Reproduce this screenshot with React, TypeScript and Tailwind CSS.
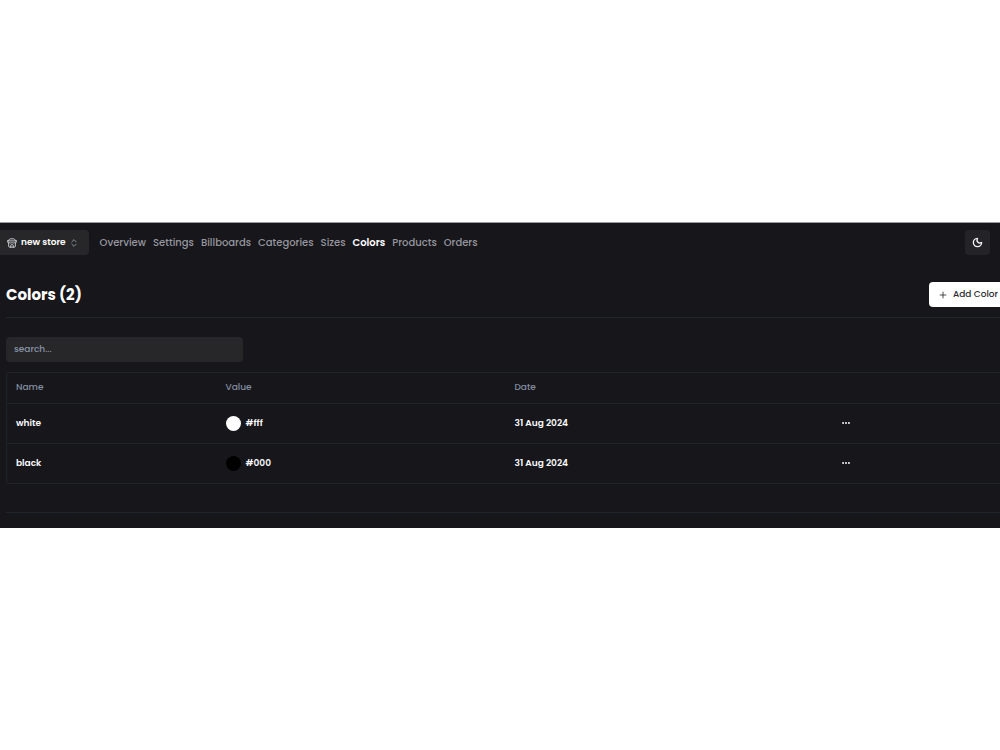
import { ChevronsUpDown, Ellipsis, Moon, Plus } from 'lucide-react';

type Color = {
  id: string;
  name: string;
  value: string;
  swatch: string;
  createdAt: string;
};

const ROUTES = [
  'Overview',
  'Settings',
  'Billboards',
  'Categories',
  'Sizes',
  'Colors',
  'Products',
  'Orders',
];

const ACTIVE_ROUTE = 'Colors';

const COLORS: Color[] = [
  { id: '1', name: 'white', value: '#fff', swatch: 'bg-white', createdAt: '31 Aug 2024' },
  { id: '2', name: 'black', value: '#000', swatch: 'bg-black', createdAt: '31 Aug 2024' },
];

function StoreIcon() {
  return (
    <svg
      aria-hidden="true"
      className="mr-1 size-[10px] text-gray-200"
      fill="none"
      stroke="currentColor"
      strokeLinecap="round"
      strokeLinejoin="round"
      strokeWidth="2"
      viewBox="0 0 24 24"
    >
      <path d="m2 7 4.41-4.41A2 2 0 0 1 7.83 2h8.34a2 2 0 0 1 1.42.59L22 7" />
      <path d="M4 12v8a2 2 0 0 0 2 2h12a2 2 0 0 0 2-2v-8" />
      <path d="M15 22v-4a2 2 0 0 0-2-2h-2a2 2 0 0 0-2 2v4" />
      <path d="M2 7h20" />
      <path d="M22 7v3a2 2 0 0 1-2 2 2.7 2.7 0 0 1-1.59-.63.7.7 0 0 0-.82 0A2.7 2.7 0 0 1 16 12a2.7 2.7 0 0 1-1.59-.63.7.7 0 0 0-.82 0A2.7 2.7 0 0 1 12 12a2.7 2.7 0 0 1-1.59-.63.7.7 0 0 0-.82 0A2.7 2.7 0 0 1 8 12a2.7 2.7 0 0 1-1.59-.63.7.7 0 0 0-.82 0A2.7 2.7 0 0 1 4 12a2 2 0 0 1-2-2V7" />
    </svg>
  );
}

function Navbar() {
  return (
    <header className="flex h-[39px] items-center pr-[10px]">
      <button
        className="flex h-[25px] items-center rounded-r bg-[#27272a] pr-[10px] pl-[7px] text-[9px] leading-[15px] font-semibold text-white"
        type="button"
      >
        <StoreIcon />
        new store
        <ChevronsUpDown className="ml-[3px] size-[10px] text-gray-400" />
      </button>
      <nav className="ml-[11px] flex items-center gap-[7px] text-[10px] leading-[15px] font-medium">
        {ROUTES.map(route => (
          <a
            className={route === ACTIVE_ROUTE ? 'font-semibold text-white' : 'text-[#96969e]'}
            href="#"
            key={route}
          >
            {route}
          </a>
        ))}
      </nav>
      <button
        aria-label="Toggle theme"
        className="ml-auto flex size-[25px] items-center justify-center rounded bg-[#242428] text-gray-100"
        type="button"
      >
        <Moon className="size-[11px]" strokeWidth={3} />
      </button>
    </header>
  );
}

function ColorTable() {
  return (
    <div className="mt-[10px] rounded-l border-y border-l border-[#20242d]">
      <table className="w-full table-fixed text-left text-[9px] leading-[15px]">
        <thead>
          <tr className="h-[30px] border-b border-[#20242d] text-[#828da0]">
            <th className="w-[21%] pl-[9px] font-medium">Name</th>
            <th className="w-[29%] pl-[10px] font-medium">Value</th>
            <th className="w-[33%] pl-[11px] font-medium">Date</th>
            <th className="pl-[10px]" />
          </tr>
        </thead>
        <tbody className="font-semibold text-gray-50">
          {COLORS.map(({ id, name, value, swatch, createdAt }) => (
            <tr className="h-10 border-b border-[#20242d] last:border-b-0" key={id}>
              <td className="pl-[9px]">{name}</td>
              <td className="pl-[10px]">
                <div className="flex items-center gap-[5px]">
                  <span className={`size-[15px] rounded-full ${swatch}`} />
                  {value}
                </div>
              </td>
              <td className="pl-[11px]">{createdAt}</td>
              <td className="pl-[10px]">
                <button aria-label={`Actions for ${name}`} className="flex items-center" type="button">
                  <Ellipsis className="size-[10px]" strokeWidth={3} />
                </button>
              </td>
            </tr>
          ))}
        </tbody>
      </table>
    </div>
  );
}

export default function App() {
  return (
    <div className="flex min-h-screen flex-col justify-center bg-white font-['Poppins','Inter',sans-serif]">
      <div className="overflow-hidden border-t border-[#9b9b9d] bg-[#17161b] pb-[15px]">
        <Navbar />
        <main className="pl-[6px]">
          <div className="mt-5 flex items-center justify-between">
            <h1 className="text-[15px] leading-[23px] font-bold text-white">Colors (2)</h1>
            <button
              className="flex h-[25px] items-center gap-[5px] rounded-l bg-white pr-[2px] pl-[9px] text-[9px] leading-[15px] font-medium text-[#2b2b30]"
              type="button"
            >
              <Plus className="size-[10px]" />
              Add Color
            </button>
          </div>
          <hr className="mt-[10px] border-[#20242d]" />
          <input
            aria-label="Search colors"
            className="mt-[19px] block h-[25px] w-[237px] rounded bg-[#27272a] px-2 text-[9px] font-medium text-white placeholder:text-[#8793a6]"
            placeholder="search..."
            type="text"
          />
          <ColorTable />
          <hr className="mt-7 border-[#20242d]" />
        </main>
      </div>
    </div>
  );
}
